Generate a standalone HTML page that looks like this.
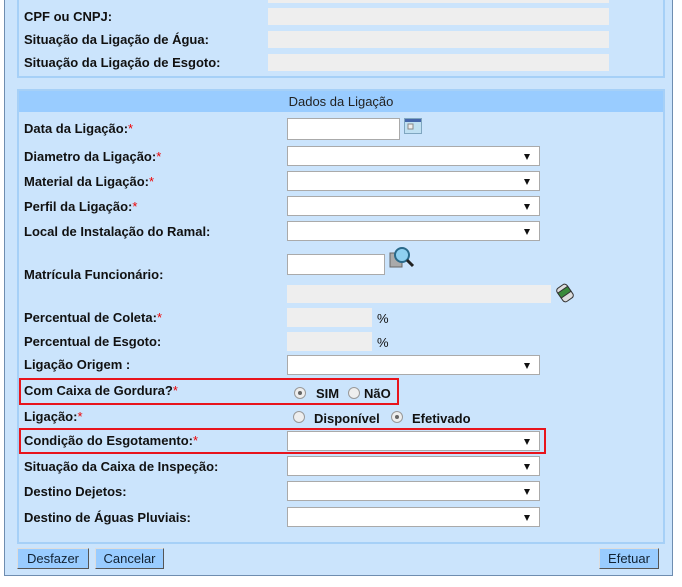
<!DOCTYPE html>
<html><head><meta charset="utf-8"><style>
*{box-sizing:border-box;margin:0;padding:0}
body{width:682px;height:587px;background:#fff;font-family:"Liberation Sans",Arial,sans-serif;font-size:13px;font-weight:bold;color:#111;position:relative;overflow:hidden}
.a{position:absolute}
#outer{left:4px;top:-2px;width:669px;height:578px;background:#cbe4fc;border:1px solid #6e8db0;border-top:none}
.fs{position:absolute;left:17px;width:648px;border:2px solid #a6d0f7;background:#cbe4fc}
.lbl{position:absolute;left:24px;white-space:nowrap}
.r{color:#e00;font-weight:normal}
.g{position:absolute;background:#eeeeee}
.in{position:absolute;background:#fff;border:1px solid #aaa}
.sel{position:absolute;left:287px;width:253px;height:20px;background:#fff;border:1px solid #aaa}
.sel:after{content:"";position:absolute;right:9px;top:7px;border-left:3.5px solid transparent;border-right:3.5px solid transparent;border-top:6px solid #111}
.btn{position:absolute;top:548px;height:21px;background:#99ccff;border:1px solid #555;border-top-color:#ddd;border-left-color:#ddd;font-weight:normal;font-size:13px;text-align:center;line-height:19px;color:#123}
.rad{position:absolute;width:12px;height:12px;border-radius:50%;border:1px solid #999;background:#eee}
.rad.on:after{content:"";position:absolute;left:3px;top:3px;width:4px;height:4px;border-radius:50%;background:#666}
.box{position:absolute;border:2px solid #e8141c}
</style></head><body>
<div class="a" id="outer"></div>
<div class="fs" style="top:-4px;height:82px"></div>
<div class="g" style="left:268px;top:-3px;width:341px;height:6px"></div>
<div class="lbl" style="top:9px">CPF ou CNPJ:</div>
<div class="g" style="left:268px;top:8px;width:341px;height:17px"></div>
<div class="lbl" style="top:32px">Situação da Ligação de Água:</div>
<div class="g" style="left:268px;top:31px;width:341px;height:17px"></div>
<div class="lbl" style="top:55px">Situação da Ligação de Esgoto:</div>
<div class="g" style="left:268px;top:54px;width:341px;height:17px"></div>

<div class="fs" style="top:89px;height:455px"></div>
<div class="a" style="left:19px;top:91px;width:644px;height:21px;background:#99ccff;text-align:center;font-weight:normal;line-height:21px;color:#222">Dados da Ligação</div>

<div class="lbl" style="top:121px">Data da Ligação:<span class="r">*</span></div>
<div class="in" style="left:287px;top:118px;width:113px;height:22px"></div>
<svg class="a" style="left:404px;top:118px" width="18" height="16"><rect x="0.5" y="0.5" width="17" height="15" fill="#bfe0f2" stroke="#7fa6c0"/><rect x="1" y="1" width="16" height="3" fill="#4466aa"/><rect x="4" y="6" width="5" height="5" fill="#eee" stroke="#888"/></svg>

<div class="lbl" style="top:149px">Diametro da Ligação:<span class="r">*</span></div>
<div class="sel" style="top:146px"></div>
<div class="lbl" style="top:174px">Material da Ligação:<span class="r">*</span></div>
<div class="sel" style="top:171px"></div>
<div class="lbl" style="top:199px">Perfil da Ligação:<span class="r">*</span></div>
<div class="sel" style="top:196px"></div>
<div class="lbl" style="top:224px">Local de Instalação do Ramal:</div>
<div class="sel" style="top:221px"></div>

<div class="lbl" style="top:267px">Matrícula Funcionário:</div>
<div class="in" style="left:287px;top:254px;width:98px;height:21px"></div>
<svg class="a" style="left:389px;top:246px" width="26" height="25"><rect x="1" y="7" width="12" height="14" fill="#aaa" stroke="#666"/><circle cx="13" cy="9" r="7" fill="#8fd0f0" stroke="#2a6a8a" stroke-width="2"/><line x1="18" y1="14" x2="24" y2="20" stroke="#222" stroke-width="3"/></svg>
<div class="g" style="left:287px;top:285px;width:264px;height:18px"></div>
<svg class="a" style="left:555px;top:283px" width="20" height="20"><g transform="rotate(-35 10 10)"><rect x="4" y="2" width="12" height="16" rx="3" fill="#ddd" stroke="#333"/><rect x="4" y="6" width="12" height="6" fill="#3a8a3a" stroke="#333"/></g></svg>

<div class="lbl" style="top:310px">Percentual de Coleta:<span class="r">*</span></div>
<div class="g" style="left:287px;top:308px;width:85px;height:19px"></div>
<div class="a" style="left:377px;top:311px;font-weight:normal">%</div>
<div class="lbl" style="top:334px">Percentual de Esgoto:</div>
<div class="g" style="left:287px;top:332px;width:85px;height:19px"></div>
<div class="a" style="left:377px;top:335px;font-weight:normal">%</div>
<div class="lbl" style="top:357px">Ligação Origem :</div>
<div class="sel" style="top:355px"></div>

<div class="box" style="left:19px;top:378px;width:380px;height:27px"></div>
<div class="lbl" style="top:383px">Com Caixa de Gordura?<span class="r">*</span></div>
<div class="rad on" style="left:294px;top:387px"></div>
<div class="a" style="left:316px;top:386px">SIM</div>
<div class="rad" style="left:348px;top:387px"></div>
<div class="a" style="left:364px;top:386px">NãO</div>

<div class="lbl" style="top:409px">Ligação:<span class="r">*</span></div>
<div class="rad" style="left:293px;top:411px"></div>
<div class="a" style="left:314px;top:411px">Disponível</div>
<div class="rad on" style="left:391px;top:411px"></div>
<div class="a" style="left:412px;top:411px">Efetivado</div>

<div class="box" style="left:19px;top:428px;width:527px;height:26px"></div>
<div class="lbl" style="top:433px">Condição do Esgotamento:<span class="r">*</span></div>
<div class="sel" style="top:431px"></div>
<div class="lbl" style="top:459px">Situação da Caixa de Inspeção:</div>
<div class="sel" style="top:456px"></div>
<div class="lbl" style="top:484px">Destino Dejetos:</div>
<div class="sel" style="top:481px"></div>
<div class="lbl" style="top:510px">Destino de Águas Pluviais:</div>
<div class="sel" style="top:507px"></div>

<div class="btn" style="left:17px;width:72px">Desfazer</div>
<div class="btn" style="left:95px;width:69px">Cancelar</div>
<div class="btn" style="left:599px;width:60px">Efetuar</div>
</body></html>
